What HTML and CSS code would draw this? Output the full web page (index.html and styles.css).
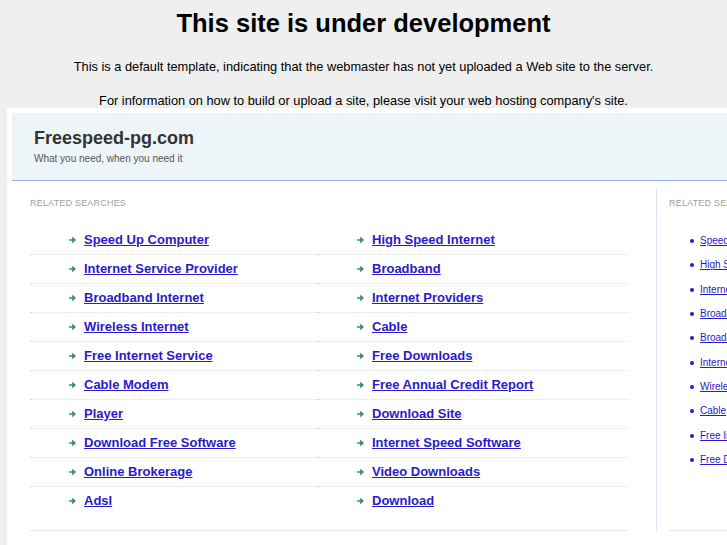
FILE: index.html
```html
<!DOCTYPE html>
<html>
<head>
  <meta name="viewport" content="width=device-width, initial-scale=1.0">
  <link rel="stylesheet" href="styles.css">
</head>
<body>
  <div class="notice">
    <h1>This site is under development</h1>
    <p>This is a default template, indicating that the webmaster has not yet uploaded a Web site to the server.</p>
    <p>For information on how to build or upload a site, please visit your web hosting company's site.</p>
  </div>

  <div class="frame">
    <div class="site-head">
      <div class="site-name">Freespeed-pg.com</div>
      <div class="site-tag">What you need, when you need it</div>
    </div>

    <div class="site-body">
      <div class="main-col">
        <div class="label">RELATED SEARCHES</div>
        <div class="links">
          <div class="cell"><span class="arrow"></span><a href="#">Speed Up Computer</a></div>
          <div class="cell"><span class="arrow"></span><a href="#">High Speed Internet</a></div>
          <div class="cell"><span class="arrow"></span><a href="#">Internet Service Provider</a></div>
          <div class="cell"><span class="arrow"></span><a href="#">Broadband</a></div>
          <div class="cell"><span class="arrow"></span><a href="#">Broadband Internet</a></div>
          <div class="cell"><span class="arrow"></span><a href="#">Internet Providers</a></div>
          <div class="cell"><span class="arrow"></span><a href="#">Wireless Internet</a></div>
          <div class="cell"><span class="arrow"></span><a href="#">Cable</a></div>
          <div class="cell"><span class="arrow"></span><a href="#">Free Internet Service</a></div>
          <div class="cell"><span class="arrow"></span><a href="#">Free Downloads</a></div>
          <div class="cell"><span class="arrow"></span><a href="#">Cable Modem</a></div>
          <div class="cell"><span class="arrow"></span><a href="#">Free Annual Credit Report</a></div>
          <div class="cell"><span class="arrow"></span><a href="#">Player</a></div>
          <div class="cell"><span class="arrow"></span><a href="#">Download Site</a></div>
          <div class="cell"><span class="arrow"></span><a href="#">Download Free Software</a></div>
          <div class="cell"><span class="arrow"></span><a href="#">Internet Speed Software</a></div>
          <div class="cell"><span class="arrow"></span><a href="#">Online Brokerage</a></div>
          <div class="cell"><span class="arrow"></span><a href="#">Video Downloads</a></div>
          <div class="cell last"><span class="arrow"></span><a href="#">Adsl</a></div>
          <div class="cell last"><span class="arrow"></span><a href="#">Download</a></div>
        </div>
        <div class="rule"></div>
      </div>

      <div class="side-col">
        <div class="label">RELATED SEARCHES</div>
        <ul class="side-links">
          <li><a href="#">Speed Up Computer</a></li>
          <li><a href="#">High Speed Internet</a></li>
          <li><a href="#">Internet Service Provider</a></li>
          <li><a href="#">Broadband Internet</a></li>
          <li><a href="#">Broadband</a></li>
          <li><a href="#">Internet Providers</a></li>
          <li><a href="#">Wireless Internet</a></li>
          <li><a href="#">Cable</a></li>
          <li><a href="#">Free Internet Service</a></li>
          <li><a href="#">Free Downloads</a></li>
        </ul>
        <div class="rule"></div>
      </div>
    </div>
  </div>
</body>
</html>
```

FILE: styles.css
```css
body {
  margin: 0;
  padding: 0;
  background: #efefef;
  font-family: "Liberation Sans", Arial, sans-serif;
  color: #000;
  overflow: hidden;
}

.notice {
  text-align: center;
  padding-top: 8px;
  height: 100px;
}

.notice h1 {
  font-size: 25.5px;
  margin: 0 0 21px 0;
  line-height: 31px;
}

.notice p {
  font-size: 12.8px;
  margin: 0 0 20px 0;
  line-height: 14px;
}

.frame {
  margin-left: 7px;
  width: 1000px;
  height: 460px;
  background: #fff;
  padding: 5px;
}

.site-head {
  background: #eef5f8;
  height: 68px;
  border-bottom: 1px solid #8fb2e6;
  padding-left: 22px;
  box-sizing: border-box;
  padding-top: 14px;
}

.site-name {
  font-size: 18px;
  font-weight: bold;
  color: #333;
  line-height: 22px;
}

.site-tag {
  font-size: 10px;
  color: #555;
  margin-top: 4px;
}

.site-body {
  display: flex;
}

.main-col {
  width: 626px;
  margin-top: 7px;
  padding: 10px 0 0 18px;
  border-right: 1px solid #dbe6f5;
}

.label {
  font-size: 9px;
  color: #a0a0a0;
  line-height: 11px;
  letter-spacing: 0.2px;
}

.links {
  display: grid;
  grid-template-columns: 288px 310px;
  margin-top: 17px;
}

.cell {
  height: 28px;
  line-height: 28px;
  border-bottom: 1px dotted #d2ddf0;
  padding-left: 39px;
  display: flex;
  align-items: center;
}

.cell.last {
  border-bottom: none;
}

.cell a {
  font-size: 13px;
  font-weight: bold;
  color: #2a1acb;
}

.arrow {
  width: 7px;
  height: 7px;
  margin-right: 8px;
  background: #3a8c80;
  clip-path: polygon(0 40%, 45% 40%, 45% 0, 100% 50%, 45% 100%, 45% 60%, 0 60%);
}

.rule {
  height: 1px;
  background: #dde8f6;
  width: 598px;
  margin-top: 15px;
}

.side-col {
  margin-top: 7px;
  padding: 10px 0 0 12px;
}

.side-links {
  list-style: none;
  margin: 20px 0 0 0;
  padding: 0 0 0 21px;
}

.side-links li {
  height: 24.3px;
  line-height: 24px;
  font-size: 10px;
  display: flex;
  align-items: center;
}

.side-links li::before {
  content: '';
  width: 4px;
  height: 4px;
  border-radius: 50%;
  background: #2a1acb;
  margin-right: 6px;
}

.side-links a {
  color: #2a1acb;
}

.side-col .rule {
  width: 200px;
  margin-top: 58px;
}
```
